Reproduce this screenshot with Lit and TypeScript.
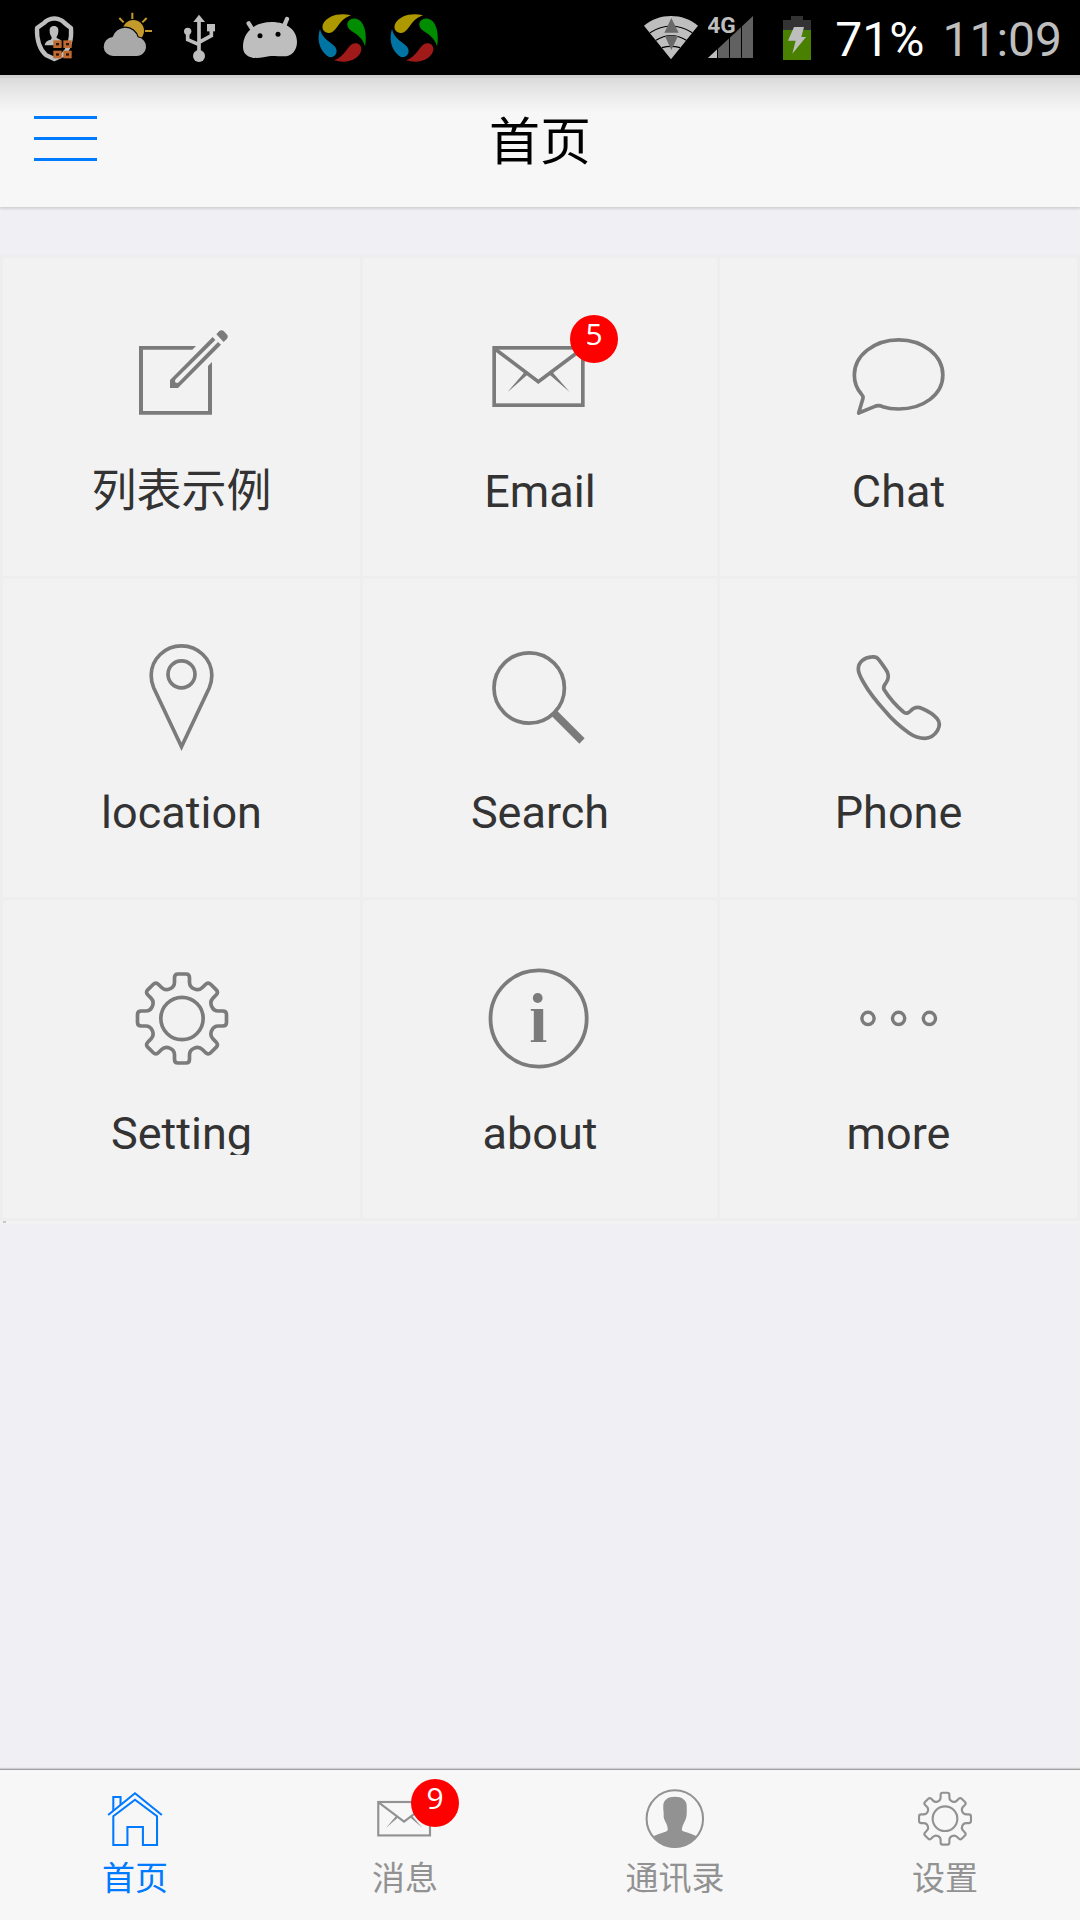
import { LitElement, html, svg, css, nothing, type SVGTemplateResult } from "lit";
import { customElement, property } from "lit/decorators.js";

/* Outline of an eight-toothed gear centred on the origin. */
function gearOutline(): string {
  const parts: string[] = [];
  for (let i = 0; i < 8; i++) {
    const a = (i * Math.PI) / 4;
    const b = a + Math.PI / 4;
    const at = (x: number, y: number, t: number) =>
      `${(x * Math.cos(t) - y * Math.sin(t)).toFixed(1)} ${(x * Math.sin(t) + y * Math.cos(t)).toFixed(1)}`;
    parts.push(
      `${i === 0 ? "M" : "L"}${at(-22.5, -109, a)}`,
      `L${at(-22.5, -122, a)}`,
      `Q${at(-22.5, -133.5, a)} ${at(-12, -133.5, a)}`,
      `L${at(12, -133.5, a)}`,
      `Q${at(22.5, -133.5, a)} ${at(22.5, -122, a)}`,
      `L${at(22.5, -109, a)}`,
      `C${at(22.5, -90, a)} ${at(-22.5, -90, b)} ${at(-22.5, -109, b)}`
    );
  }
  return parts.join("") + "Z";
}

const third = "scale(.33333)";

const glyphs: Record<string, SVGTemplateResult> = {
  compose: svg`<g transform="translate(-122 -77) ${third}" fill="currentColor">
    <path d="M588 318H417V524H636V366L624 378V513H429V329H577Z"/>
    <path d="M638 291L510 420V444H534L663 314L654 306L536 427Q530 431 526 427Q523 423 527 418L646 300Z"/>
    <path d="M649 283L658 273Q664 268 671 273L680 283Q686 289 681 296L671 306Z"/></g>`,
  mail: svg`<g transform="translate(-120 -77) ${third}">
    <rect x="402.5" y="323.5" width="266" height="172" fill="none" stroke="currentColor" stroke-width="11"/>
    <path d="M404 326L535 425L667 326" fill="none" stroke="currentColor" stroke-width="11"/>
    <path d="M494 396L443 456L504 403ZM577 396L629 456L567 403Z" fill="currentColor"/></g>`,
  chat: svg`<g transform="translate(-129 -77) ${third}">
    <path fill="none" stroke="currentColor" stroke-width="11" stroke-linejoin="round"
      d="M566 299.5C640 299.5 698.5 347 698.5 405C698.5 464 640 507 566 507C545 507 530 504 518 500Q505 494 493 500L446 519L459 475Q460 468 454 462C441 447 433 427 433 405C433 347 492 299.5 566 299.5Z"/></g>`,
  location: svg`<g transform="translate(-122 -68) ${third}" fill="none" stroke="currentColor" stroke-width="11">
    <path d="M544.5 227.5C495 227.5 453.5 267 453.5 316Q453.5 336 461 353L544.5 530L628 353Q635.5 336 635.5 316C635.5 267 594 227.5 544.5 227.5Z"/>
    <circle cx="544.5" cy="313" r="40.5"/></g>`,
  search: svg`<g fill="none" stroke="currentColor">
    <circle cx="49.2" cy="50" r="35.2" stroke-width="3.7"/>
    <path d="M74 75L102 103" stroke-width="7.5"/></g>`,
  phone: svg`<path fill="none" stroke="currentColor" stroke-width="3.7" stroke-linejoin="round"
    d="M33 18.9C36 18.5 38 19 39.5 21.3C43 26 46 30 48.3 34C50 38 49.5 41 47.5 44C45 47.5 44 49 45 51.5C50 59.5 57.5 68 64.5 74C67.5 76 69 75.5 72 72.5C75.5 69 78.5 68.5 83 70.5C89 73 94.5 76.5 98 80.5C101.5 84.5 101 88 98.5 92.5C95 98 91.5 100.3 86 100.3C80 100.3 75 98.5 70 95C61 88.5 53 81.5 46.5 73.5C37 63 30 54 25.5 46C22 40 19.3 36 19.3 31C19.3 24 25 19.5 33 18.9Z"/>`,
  gear: svg`<g transform="translate(60 59.5) ${third}" fill="none" stroke="currentColor" stroke-width="11">
    <path d="${gearOutline()}"/><circle r="63.5"/></g>`,
  info: svg`<circle cx="58.6" cy="59.5" r="48.1" fill="none" stroke="currentColor" stroke-width="3.8"/>
    <g fill="currentColor"><circle cx="57.7" cy="39" r="4.9"/>
    <rect x="53.8" y="50" width="9.4" height="33"/>
    <rect x="50.8" y="50" width="8" height="1.8"/>
    <rect x="50.8" y="81.2" width="15.5" height="1.8"/></g>`,
  more: svg`<g fill="none" stroke="currentColor" stroke-width="3.4">
    <circle cx="29" cy="59.4" r="6.1"/><circle cx="59.6" cy="59.4" r="6.1"/><circle cx="90.4" cy="59.4" r="6.1"/></g>`,
  home: svg`<g transform="matrix(.5903 0 0 .5714 -171.4 -58.3)" fill="none" stroke="currentColor" stroke-width="6">
    <path d="M314 195L392 130L470 195"/>
    <path d="M329 199V285H370V231H415V285H456V199L392 149Z"/>
    <path d="M329 182V141H350V164"/></g>`,
  contact: svg`<g transform="matrix(.5903 0 0 .5714 -171.4 -58.3)">
    <ellipse cx="391.5" cy="206" rx="82" ry="85" fill="none" stroke="currentColor" stroke-width="6"/>
    <path fill="currentColor" d="M391.5 140C412 140 426 150 426 167C426 178 427 192 425 200C422 216 413 222 412 240Q413 244 425 247Q440 251 455 259C440 280 417 293 391.5 293C366 293 345 280 329 259Q345 251 360 247Q371 244 371 238C371 222 361 214 359 200C360 185 357 178 358 167C358 150 371 140 391.5 140Z"/></g>`,
};

const swirl = svg`
  <path fill="#ad9800" d="M1053 46C1020 38 985 45 969 72C962 92 980 104 996 97C1015 85 1018 58 1053 46Z"/>
  <path fill="#008c00" d="M1042 70C1047 52 1072 50 1084 66C1098 85 1100 115 1095 139C1088 110 1062 100 1048 88C1043 82 1041 76 1042 70Z"/>
  <path fill="#a01a1a" d="M1002 181C1030 170 1038 150 1050 137C1062 124 1086 128 1084 150C1080 174 1045 194 1002 181Z"/>
  <path fill="#0075a3" d="M960 88C967 115 985 122 1003 138C1017 152 1008 172 990 172C970 165 946 130 960 88Z"/>`;

const notices: SVGTemplateResult[] = [
  svg`<svg class="notice" viewBox="54 0 216 225" aria-hidden="true">
    <path fill="none" stroke="#bebebe" stroke-width="13" stroke-linejoin="round" d="M163 55Q142 57 132 69Q122 76 111 84Q109 140 139 166L163 177L187 166Q217 140 213 84Q202 76 194 69Q184 57 163 55Z"/>
    <path fill="#bebebe" d="M162 78C172 78 176 85 175 94C175 103 171 108 169 112Q170 116 182 120V136H134Q135 123 152 119Q156 116 155 112C151 106 149 101 149 94C148 85 152 78 162 78Z"/>
    <g fill="#2a1608" stroke="#bf6a30" stroke-width="8"><rect x="164" y="125" width="17" height="15"/><rect x="194" y="125" width="17" height="15"/><rect x="164" y="156" width="17" height="15"/><rect x="194" y="156" width="17" height="15"/></g></svg>`,
  svg`<svg class="notice" viewBox="270 0 216 225" aria-hidden="true">
    <circle cx="400" cy="92" r="32" fill="#c49a2c"/>
    <path stroke="#c49a2c" stroke-width="6" d="M397 38V57M358 54L371 67M440 54L427 67M435 93H456"/>
    <path fill="#a9a9a9" stroke="#000" stroke-width="7" paint-order="stroke" d="M341 168A28 28 0 0 1 338 111A39 39 0 0 1 413 112A28 28 0 0 1 407 168Z"/></svg>`,
  svg`<svg class="notice" viewBox="486 0 216 225" aria-hidden="true">
    <g fill="#bebebe"><path d="M597 44L615 66H580Z"/><circle cx="597" cy="168" r="18"/><circle cx="563" cy="94" r="11"/><rect x="621" y="72" width="24" height="22"/></g>
    <path fill="none" stroke="#bebebe" stroke-width="11" d="M597 60V160M563 98V119L597 134M634 90V107L597 127"/></svg>`,
  svg`<svg class="notice" viewBox="702 0 216 225" aria-hidden="true">
    <path fill="#bebebe" d="M729 140C729 95 765 66 815 66C862 66 891 92 891 125C891 152 875 169 850 169C825 169 815 166 790 172C760 178 729 172 729 140Z"/>
    <path stroke="#bebebe" stroke-width="13" stroke-linecap="round" d="M746 70L756 86M861 57L853 76"/>
    <circle cx="780" cy="107" r="7.500"/><circle cx="834" cy="103" r="7.500"/></svg>`,
  svg`<svg class="notice" viewBox="918 0 216 225" aria-hidden="true">${swirl}</svg>`,
  svg`<svg class="notice" viewBox="918 0 216 225" aria-hidden="true">${swirl}</svg>`,
];

@customElement("status-bar")
class StatusBar extends LitElement {
  static styles = css`
    :host {
      display: flex;
      justify-content: space-between;
      height: 75px;
      padding: 0 18px;
      background: #000;
      font-family: Roboto, sans-serif;
      font-size: 48px;
      line-height: 75px;
      color: #bebebe;
    }
    .group { display: flex; }
    .notice { width: 72px; height: 75px; }
    .wifi { width: 54px; height: 75px; margin-right: 10px; }
    .signal { width: 45px; height: 75px; margin-right: 30px; }
    .battery { width: 28px; height: 75px; margin-right: 24px; }
    .net { font: 700 68px Roboto, sans-serif; }
    .percent { color: #fff; margin-right: 18px; }
    .percent, .clock { padding-top: 2px; }
  `;
  render() {
    return html`
      <div class="group">${notices.map((n) => html`${n}`)}</div>
      <div class="group">
        <svg class="wifi" viewBox="70 0 162 225" aria-hidden="true">
          <path fill="#bebebe" d="M70 77C115 38 187 38 232 77L151 178Z"/>
          <path fill="none" stroke="#000" stroke-width="3.500" d="M88 98Q151 58 215 98M106 121Q151 92 197 121M124 143Q151 135 178 143"/>
          <path fill="#696969" d="M152 54L174 98H131ZM133 109Q152 104 172 109L152 150Z"/>
        </svg>
        <svg class="signal" viewBox="261 0 135 225" aria-hidden="true">
          <path fill="#616161" d="M261 174L396 48V174Z"/>
          <path fill="#bebebe" d="M261 174L289 148V174Z"/>
          <path stroke="#000" stroke-width="3" d="M289.500 40V180M325.500 40V180M361.500 40V180"/>
          <text class="net" x="259" y="98" fill="#bebebe" stroke="#000" stroke-width="10" paint-order="stroke">4G</text>
        </svg>
        <svg class="battery" viewBox="486 0 84 225" aria-hidden="true">
          <path fill="#333" d="M510 48H546V60H570V90H486V60H510Z"/>
          <rect x="486" y="90" width="84" height="90" fill="#4a8000"/>
          <path fill="#bebebe" d="M519 81H549L541 111H555L514 161L524 122H501Z"/>
        </svg>
        <span class="percent">71%</span>
        <span class="clock">11:09</span>
      </div>
    `;
  }
}

@customElement("badge-icon")
class BadgeIcon extends LitElement {
  @property() name = "";
  @property() badge = "";
  static styles = css`
    :host { display: block; position: relative; }
    .glyph { display: block; width: 100%; height: 100%; }
    .badge {
      position: absolute;
      left: var(--badge-left, 90px);
      top: var(--badge-top, -2px);
      width: 48px;
      height: 48px;
      border-radius: 50%;
      background: #f00;
      color: #fff;
      font: 30px/38px "Open Sans", sans-serif;
      text-align: center;
    }
  `;
  render() {
    return html`
      <svg class="glyph" viewBox="0 0 120 120" aria-hidden="true">${glyphs[this.name]}</svg>
      ${this.badge ? html`<span class="badge">${this.badge}</span>` : nothing}
    `;
  }
}

interface Entry {
  label: string;
  icon: string;
  badge?: string;
}

const entries: Entry[] = [
  { label: "列表示例", icon: "compose" },
  { label: "Email", icon: "mail", badge: "5" },
  { label: "Chat", icon: "chat" },
  { label: "location", icon: "location" },
  { label: "Search", icon: "search" },
  { label: "Phone", icon: "phone" },
  { label: "Setting", icon: "gear" },
  { label: "about", icon: "info" },
  { label: "more", icon: "more" },
];

const tabs: Entry[] = [
  { label: "首页", icon: "home" },
  { label: "消息", icon: "mail", badge: "9" },
  { label: "通讯录", icon: "contact" },
  { label: "设置", icon: "gear" },
];

@customElement("app-root")
class AppRoot extends LitElement {
  static styles = css`
    :host {
      display: flex;
      flex-direction: column;
      min-height: 100vh;
      background: #efeff4;
      font-family: Roboto, "Noto Sans CJK SC", sans-serif;
    }
    a { text-decoration: none; }
    .header {
      display: grid;
      grid-template-columns: 1fr auto 1fr;
      align-items: start;
      height: 132px;
      padding: 0 30px;
      background: linear-gradient(#cfcfcf 0 3px, #dadada 3px, #e9e9e9 18px, #f7f7f7 38px);
      box-shadow: 0 2px 2px #d2d2d6;
    }
    .menu {
      justify-self: start;
      display: block;
      padding: 41px 4px;
      border: 0;
      background: none;
      color: #007aff;
    }
    .bars { display: block; width: 63px; height: 45px; }
    .title {
      margin: 0;
      font-size: 51px;
      font-weight: 400;
      line-height: 136px;
      color: #000;
    }
    .main { flex: 1; padding-top: 48px; }
    .grid {
      display: grid;
      grid-template-columns: repeat(3, 1fr);
      margin: 0;
      padding: 0;
      list-style: none;
      border-top: 3px solid #eee;
      background: #f2f2f2;
    }
    .grid::after {
      content: "";
      width: 3px;
      height: 2px;
      margin: 0 0 1px 3px;
      background: #c8c8c8;
    }
    .cell { border: 0 solid #eee; border-bottom-width: 3px; }
    .cell:nth-child(3n + 1) { border-left-width: 3px; }
    .cell:nth-child(3n + 2) { border-left-width: 3px; border-right-width: 3px; }
    .cell:nth-child(3n) { border-right-width: 3px; }
    .link {
      display: flex;
      flex-direction: column;
      align-items: center;
      padding: 59px 0 60px;
      color: #7b7b7b;
    }
    .icon { width: 120px; height: 120px; }
    .label {
      align-self: stretch;
      margin-top: 31px;
      font-size: 45px;
      line-height: 48px;
      text-align: center;
      color: #333;
      clip-path: inset(-12px 0 3px);
    }
    .tabs {
      display: flex;
      height: 150px;
      border-top: 1px solid #a0a0a2;
      box-shadow: 0 -1px 1px #cfcfd4;
      background: #f7f7f7;
    }
    .tab {
      flex: 1;
      display: flex;
      flex-direction: column;
      align-items: center;
      padding-top: 14px;
      color: #929292;
      font-size: 33px;
      line-height: 50px;
    }
    .tab.active { color: #007aff; }
    .tab-icon {
      width: 70px;
      height: 70px;
      --badge-left: 41px;
      --badge-top: -5px;
    }
  `;
  render() {
    return html`
      <status-bar></status-bar>
      <header class="header">
        <button class="menu" type="button" aria-label="菜单">
          <svg class="bars" viewBox="0 0 63 45" aria-hidden="true">
            <path stroke="currentColor" stroke-width="3" d="M0 1.500H63M0 22.500H63M0 43.500H63"/>
          </svg>
        </button>
        <h1 class="title">首页</h1>
      </header>
      <main class="main">
        <ul class="grid">
          ${entries.map(
            (e) => html`<li class="cell">
              <a class="link" href="#${e.icon}">
                <badge-icon class="icon" .name=${e.icon} .badge=${e.badge ?? ""}></badge-icon>
                <span class="label">${e.label}</span>
              </a>
            </li>`
          )}
        </ul>
      </main>
      <nav class="tabs">
        ${tabs.map(
          (t, i) => html`<a class="tab ${i === 0 ? "active" : ""}" href="#tab-${t.icon}">
            <badge-icon class="tab-icon" .name=${t.icon} .badge=${t.badge ?? ""}></badge-icon>
            <span>${t.label}</span>
          </a>`
        )}
      </nav>
    `;
  }
}
